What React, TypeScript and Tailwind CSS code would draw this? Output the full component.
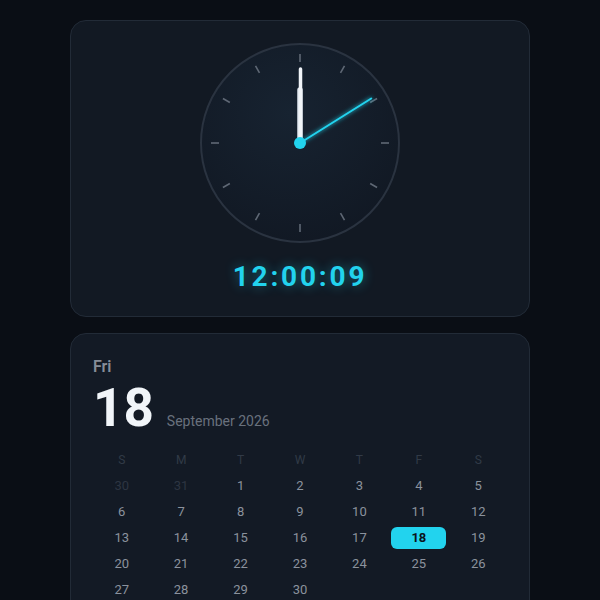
import React from "react";

const FONT = { fontFamily: "Roboto, 'Noto Sans', sans-serif" };

function AnalogClock() {
  const cx = 100;
  const cy = 100;
  const ticks = Array.from({ length: 12 }, (_, i) => i * 30);
  const secAngle = 58;
  const rad = (secAngle * Math.PI) / 180;
  const sx = cx + Math.sin(rad) * 84;
  const sy = cy - Math.cos(rad) * 84;

  return (
    <svg width="200" height="200" viewBox="0 0 200 200">
      <defs>
        <radialGradient id="face" cx="0.45" cy="0.35" r="0.7">
          <stop offset="0%" stopColor="#172331" />
          <stop offset="100%" stopColor="#111823" />
        </radialGradient>
        <filter id="glow" x="-50%" y="-50%" width="200%" height="200%">
          <feGaussianBlur stdDeviation="2" result="b" />
          <feMerge>
            <feMergeNode in="b" />
            <feMergeNode in="SourceGraphic" />
          </feMerge>
        </filter>
      </defs>
      <circle cx={cx} cy={cy} r="99" fill="url(#face)" stroke="#2a3340" strokeWidth="2" />
      {ticks.map((a) => {
        const r = (a * Math.PI) / 180;
        return (
          <line
            key={a}
            x1={cx + Math.sin(r) * 81}
            y1={cy - Math.cos(r) * 81}
            x2={cx + Math.sin(r) * 89}
            y2={cy - Math.cos(r) * 89}
            stroke="#5f6875"
            strokeWidth="1.6"
          />
        );
      })}
      {/* hour hand */}
      <line x1={cx} y1={cy} x2={cx} y2={cy - 53} stroke="#e2e8f0" strokeWidth="5.5" strokeLinecap="round" />
      {/* minute hand */}
      <line x1={cx + 0.5} y1={cy} x2={cx + 0.5} y2={cy - 74} stroke="#f1f5f9" strokeWidth="3.5" strokeLinecap="round" />
      {/* second hand */}
      <line x1={cx} y1={cy} x2={sx} y2={sy} stroke="#22d3ee" strokeWidth="2" strokeLinecap="round" filter="url(#glow)" />
      <circle cx={cx} cy={cy} r="6" fill="#22d3ee" />
    </svg>
  );
}

function Calendar() {
  const heads = ["S", "M", "T", "W", "T", "F", "S"];
  const cells: { d: number; muted?: boolean }[] = [
    { d: 30, muted: true },
    { d: 31, muted: true },
  ];
  for (let i = 1; i <= 30; i++) cells.push({ d: i });

  return (
    <div className="grid grid-cols-7 gap-y-1 mt-[14px]">
      {heads.map((h, i) => (
        <div key={i} className="h-[22px] flex items-center justify-center text-[12px] text-[#313a47]">
          {h}
        </div>
      ))}
      {cells.map((c, i) => (
        <div key={i} className="h-[22px] flex items-center justify-center">
          {c.d === 18 && !c.muted ? (
            <span className="w-[55px] h-[22px] flex items-center justify-center text-[13px] font-bold rounded-md bg-[#22d3ee] text-[#0b1320]">
              {c.d}
            </span>
          ) : (
            <span className={c.muted ? "text-[13px] text-[#2d3542]" : "text-[13px] text-[#8b929d]"}>{c.d}</span>
          )}
        </div>
      ))}
    </div>
  );
}

export default function App() {
  return (
    <div className="min-h-screen bg-[#0a0e15] pt-5 pb-10" style={FONT}>
      <div className="w-[460px] mx-auto flex flex-col gap-4">
        {/* Clock card */}
        <div className="rounded-2xl border border-[#222b37] bg-[#121923] px-[22px] pt-[22px] pb-[21px] flex flex-col items-center">
          <AnalogClock />
          <div className="mt-4 text-[28px] leading-9 font-bold tracking-[0.1em] text-[#22d3ee] [text-shadow:0_0_12px_rgba(34,211,238,0.45)] tabular-nums">
            12:00:09
          </div>
        </div>

        {/* Calendar card */}
        <div className="rounded-2xl border border-[#222b37] bg-[#131a25] p-[21px]">
          <div className="pl-px">
            <div className="text-[16px] leading-6 font-semibold text-[#868d98]">Fri</div>
            <div className="flex items-baseline gap-[13px] mt-[3px]">
              <span className="text-[53px] leading-none font-bold text-[#f1f5f9]">18</span>
              <span className="text-[14px] text-[#69717d]">September 2026</span>
            </div>
          </div>
          <Calendar />
        </div>
      </div>
    </div>
  );
}
